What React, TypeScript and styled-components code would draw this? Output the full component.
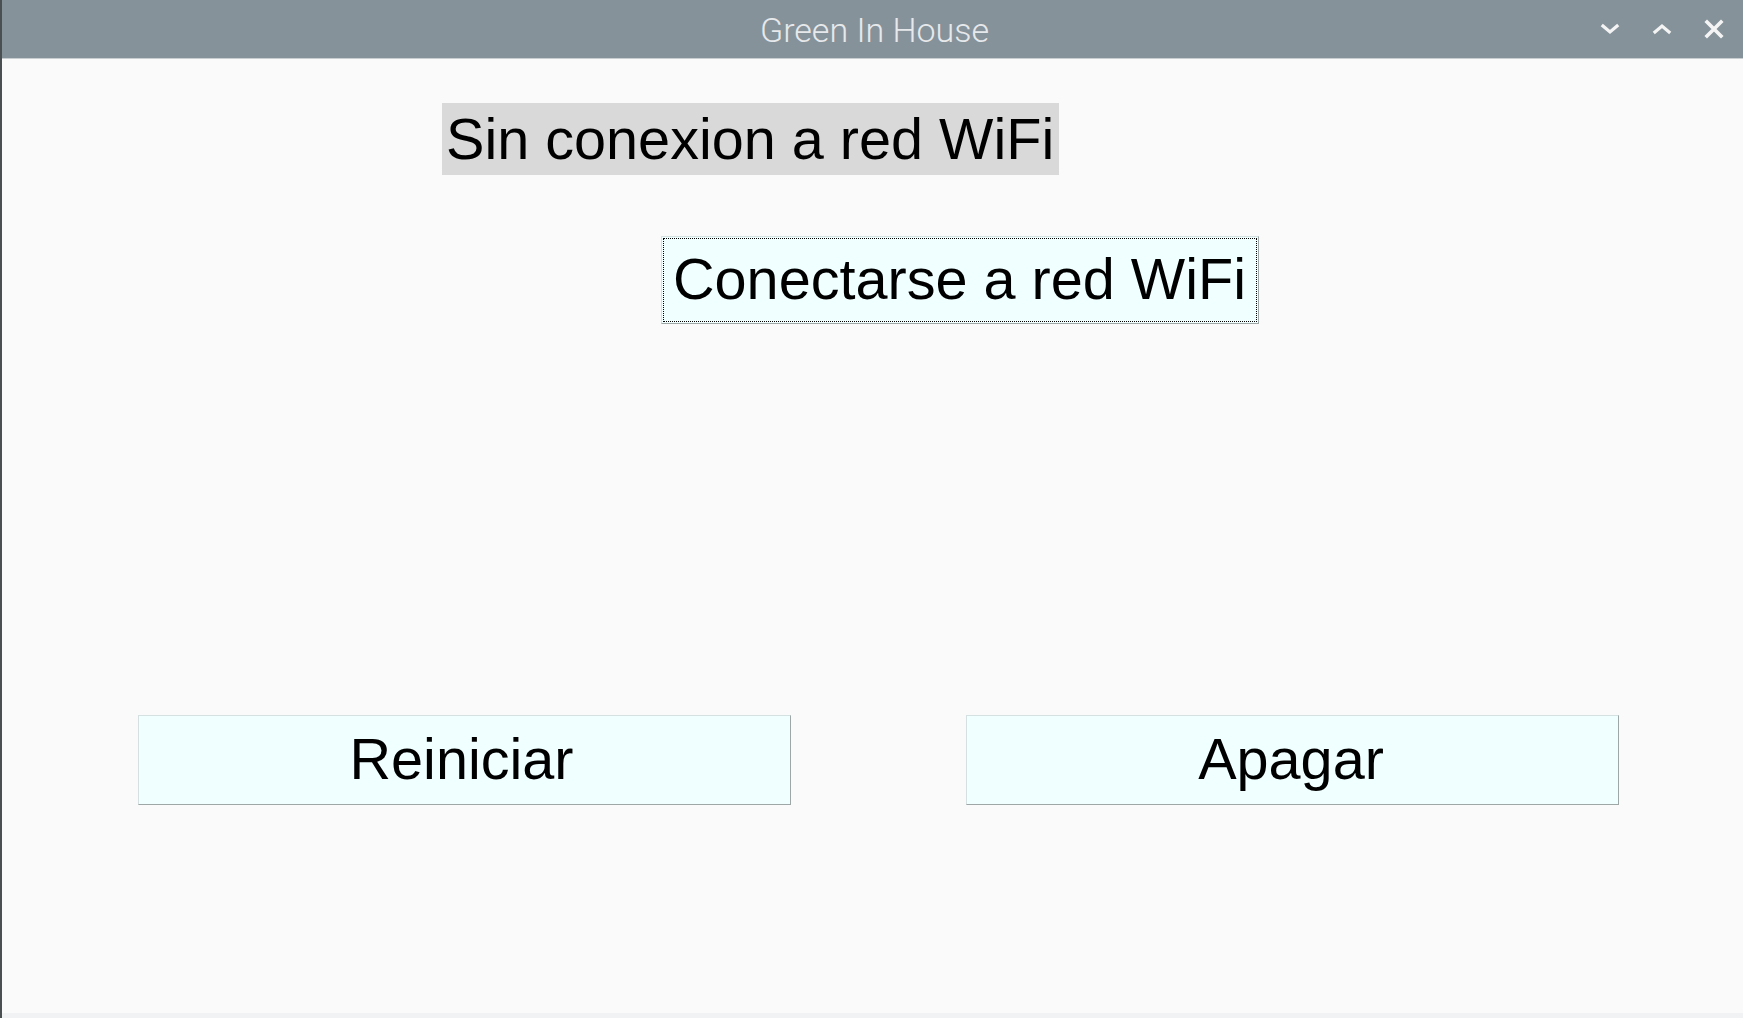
import React from "react";
import styled, { createGlobalStyle } from "styled-components";

const Global = createGlobalStyle`
  html, body { margin: 0; padding: 0; width: 100%; height: 100%; overflow: hidden; }
  body { font-family: "Liberation Sans", Arial, sans-serif; background: #fafafa; }
  #root { height: 100%; }
`;

const Window = styled.div`
  height: 100vh;
  display: flex;
  flex-direction: column;
  box-sizing: border-box;
  border-left: 2px solid #4a4f52;
  background: #fafafa;
`;

const TitleBar = styled.div`
  height: 59px;
  flex: none;
  background: #86929a;
  display: grid;
  grid-template-columns: 1fr auto 1fr;
  align-items: center;
  border-bottom: 1px solid #c9ced1;
  box-sizing: border-box;
`;

const Title = styled.div`
  grid-column: 2;
  font-family: Roboto, "Noto Sans", sans-serif;
  font-weight: 300;
  font-size: 34px;
  color: #e6e9eb;
  padding-top: 2px;
  padding-left: 4px;
`;

const Controls = styled.div`
  grid-column: 3;
  justify-self: end;
  display: flex;
  align-items: center;
  gap: 32px;
  padding-right: 19px;
`;

const Ctrl = styled.svg`
  width: 20px;
  height: 20px;
  display: block;
`;

const Content = styled.div`
  flex: 1;
  display: flex;
  flex-direction: column;
  padding-top: 44px;
  border-bottom: 5px solid #f0f2f3;
`;

const Row = styled.div<{ $indent: number; $top?: number }>`
  display: flex;
  padding-left: ${(p) => p.$indent}px;
  margin-top: ${(p) => p.$top ?? 0}px;
`;

const StatusLabel = styled.div`
  background: #d9d9d9;
  color: #000;
  font-size: 57.6px;
  height: 72px;
  line-height: 72px;
  padding: 0 5px 0 4px;
  box-sizing: border-box;
  white-space: nowrap;
`;

const TkButton = styled.button<{ $width?: number; $focus?: boolean; $shift?: number }>`
  font-family: "Liberation Sans", Arial, sans-serif;
  font-size: 57.6px;
  color: #000;
  background: #f0ffff;
  height: ${(p) => (p.$focus ? 88 : 90)}px;
  width: ${(p) => (p.$width ? `${p.$width}px` : "auto")};
  padding: 0 ${(p) => (p.$focus ? 11 : 0)}px;
  padding-right: ${(p) => (p.$shift ? p.$shift : p.$focus ? 12 : 0)}px;
  box-sizing: border-box;
  line-height: 1;
  white-space: nowrap;
  cursor: pointer;
  border: 1px solid;
  border-color: #d5e0e0 #9ea6a6 #9ea6a6 #d5e0e0;
  ${(p) =>
    p.$focus
      ? `outline: 1px dotted #000; outline-offset: -3px;`
      : `outline: none;`}
`;

const BottomRow = styled.div`
  display: flex;
  padding-left: 136px;
  gap: 175px;
  margin-top: 391px;
`;

export default function App() {
  return (
    <>
      <Global />
      <Window>
        <TitleBar>
          <Title>Green In House</Title>
          <Controls>
            <Ctrl viewBox="0 0 20 20">
              <path d="M3 7 L10 13 L17 7" fill="none" stroke="#f4f4f4" strokeWidth="3.2" strokeLinecap="square" />
            </Ctrl>
            <Ctrl viewBox="0 0 20 20">
              <path d="M3 13 L10 7 L17 13" fill="none" stroke="#f4f4f4" strokeWidth="3.2" strokeLinecap="square" />
            </Ctrl>
            <Ctrl viewBox="0 0 20 20">
              <path d="M3 3 L17 17 M17 3 L3 17" fill="none" stroke="#f4f4f4" strokeWidth="3.6" strokeLinecap="square" />
            </Ctrl>
          </Controls>
        </TitleBar>
        <Content>
          <Row $indent={440}>
            <StatusLabel>Sin conexion a red WiFi</StatusLabel>
          </Row>
          <Row $indent={659} $top={61}>
            <TkButton $focus>Conectarse a red WiFi</TkButton>
          </Row>
          <BottomRow>
            <TkButton $width={653} $shift={6}>Reiniciar</TkButton>
            <TkButton $width={653} $shift={3}>Apagar</TkButton>
          </BottomRow>
        </Content>
      </Window>
    </>
  );
}
